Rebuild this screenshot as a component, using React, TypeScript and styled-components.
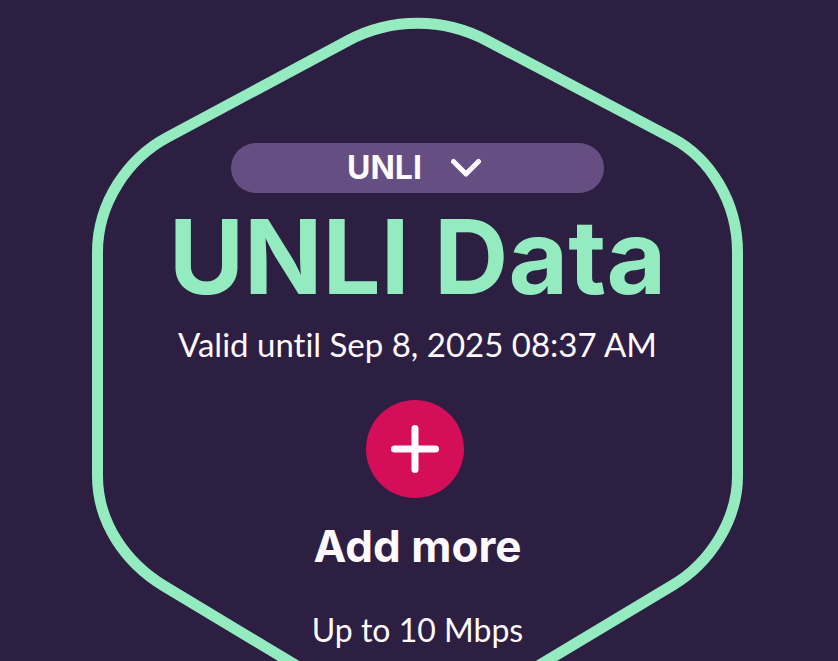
import React from "react";
import styled, { createGlobalStyle } from "styled-components";

const color = {
  night: "#2c1f42",
  mint: "#94ebbf",
  violet: "#654f82",
  pink: "#d40e59",
  white: "#fffaff",
};

const font = {
  text: `Lato, "Open Sans", sans-serif`,
  display: `Inter, "Open Sans", sans-serif`,
};

const GlobalStyle = createGlobalStyle`
  *, *::before, *::after { box-sizing: border-box; }
  body {
    margin: 0;
    background: ${color.night};
    color: ${color.white};
    font-family: ${font.text};
    font-variant-ligatures: none;
  }
`;

const Page = styled.main`
  height: 100vh;
  overflow: hidden;
  padding: 18px 95px 0 92px;
`;

const Card = styled.section`
  display: grid;
  grid-template-columns: minmax(0, 1fr);
  max-width: 720px;
  margin: 0 auto;
`;

const Outline = styled.svg`
  grid-area: 1 / 1;
  width: 100%;
  height: auto;
  overflow: visible;
  pointer-events: none;
`;

const Content = styled.div`
  grid-area: 1 / 1;
  display: flex;
  flex-direction: column;
  align-items: center;
  padding-top: 125px;
  text-align: center;
`;

const Pill = styled.div`
  display: flex;
  align-items: center;
  justify-content: center;
  gap: 28px;
  width: 373px;
  max-width: 80%;
  height: 50px;
  padding-right: 6px;
  border-radius: 25px;
  background: ${color.violet};
`;

const PlanSelect = styled.select`
  appearance: none;
  margin: 0;
  padding: 0;
  border: 0;
  background: transparent;
  color: inherit;
  font: 700 32px/40px ${font.display};
  cursor: pointer;
`;

const Title = styled.h1`
  margin: 4px 0 0;
  color: ${color.mint};
  font-family: ${font.display};
  font-size: 103px;
  font-weight: 700;
  line-height: 120px;
  white-space: nowrap;
`;

const Detail = styled.p<{ $gap: number; $size: number }>`
  margin: ${({ $gap }) => $gap}px 0 0;
  font-size: ${({ $size }) => $size}px;
  line-height: 40px;
  white-space: nowrap;
`;

const AddButton = styled.button`
  display: grid;
  place-items: center;
  width: 98px;
  height: 98px;
  margin: 36px 6px 0 0;
  padding: 0;
  border: 0;
  border-radius: 50%;
  background: ${color.pink};
  color: ${color.white};
  cursor: pointer;
`;

const AddLabel = styled.label`
  margin-top: 20px;
  font-family: ${font.display};
  font-size: 44px;
  font-weight: 700;
  line-height: 56px;
`;

export default function App() {
  return (
    <>
      <GlobalStyle />
      <Page>
        <Card>
          <Outline viewBox="0 0 651 703" fill="none" aria-hidden="true">
            <path
              d="M5.5 234 C5.5 185 36 140 76 119 L256 22.6 A148 148 0 0 1 395 22.6 L580 120 C618 140 645.5 184 645.5 234 V458 C645.5 502 618 545 581 567 L386 684 C354 703 297 703 265 684 L72 568 C34 545 5.5 505 5.5 458 Z"
              stroke={color.mint}
              strokeWidth="11"
            />
          </Outline>
          <Content>
            <Pill>
              <PlanSelect aria-label="Plan" defaultValue="unli">
                <option value="unli">UNLI</option>
              </PlanSelect>
              <svg width="32" height="20" viewBox="0 0 32 20" fill="none" aria-hidden="true">
                <path
                  d="M3.5 3.5 L16 16 L28.5 3.5"
                  stroke="currentColor"
                  strokeWidth="5"
                  strokeLinecap="round"
                  strokeLinejoin="round"
                />
              </svg>
            </Pill>
            <Title>UNLI Data</Title>
            <Detail $gap={7} $size={33}>Valid until Sep 8, 2025 08:37 AM</Detail>
            <AddButton id="add-more" type="button">
              <svg width="50" height="50" viewBox="0 0 50 50" fill="none" aria-hidden="true">
                <path
                  d="M25 4.5 V45.5 M4.5 25 H45.5"
                  stroke="currentColor"
                  strokeWidth="7"
                  strokeLinecap="round"
                />
              </svg>
            </AddButton>
            <AddLabel htmlFor="add-more">Add more</AddLabel>
            <Detail $gap={36} $size={32}>Up to 10 Mbps</Detail>
          </Content>
        </Card>
      </Page>
    </>
  );
}
